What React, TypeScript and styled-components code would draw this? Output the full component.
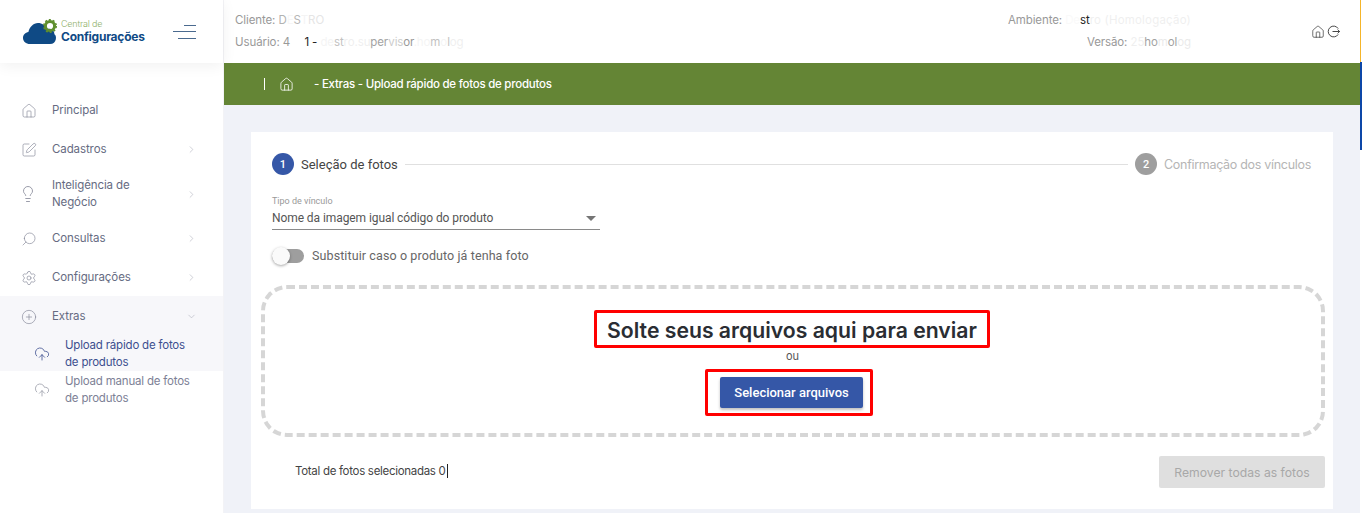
import {
  ChevronDown,
  ChevronRight,
  CirclePlus,
  CloudUpload,
  House,
  Lightbulb,
  Search,
  Settings,
  SquarePen,
} from 'lucide-react';
import type { ReactNode } from 'react';
import styled, { createGlobalStyle } from 'styled-components';

const GREEN = '#648535';
const BLUE = '#3557a7';
const PAGE_BG = '#f0f2f8';
const FONT = 'Inter, "Open Sans", sans-serif';
const FORM_FONT = 'Roboto, "Open Sans", sans-serif';

const GlobalStyle = createGlobalStyle`
  html, body {
    margin: 0;
    height: 513px;
    overflow: hidden;
    background: #fff;
    font-family: ${FONT};
  }
  * { box-sizing: border-box; }
`;

const LogoutIcon = () => (
  <svg width='13' height='13' viewBox='0 0 13 13' fill='none' stroke='#333' strokeWidth='0.9'>
    <path d='M11.2 3.6A5.4 5.4 0 1 0 11.2 9.4' />
    <path d='M5.5 6.5H12.6M10.6 4.6l2 1.9-2 1.9' />
  </svg>
);

const CloudLogo = () => (
  <svg width='36' height='26' viewBox='0 0 36 26'>
    <path
      d='M7 25C3 25 0 22.4 0 19c0-3.2 2.4-5.6 5.4-6C6.4 8 10.4 4 15 4c4 0 7.6 2.4 9 6 .6-.2 1.4-.2 2-.2 3.2 0 5.4 2.4 5.4 5.4 2.6 1 2.6 9.8-4.4 9.8Z'
      fill='#0f4a85'
    />
    <circle cx='27' cy='7' r='4.6' fill='none' stroke='#5f8f2e' strokeWidth='3' />
    <circle cx='27' cy='7' r='6.2' fill='none' stroke='#5f8f2e' strokeWidth='1.6' strokeDasharray='2 1.9' />
  </svg>
);

type NavEntry = { label: ReactNode; icon: ReactNode; chevron?: boolean };

const NAV_TOP: NavEntry[] = [
  { label: 'Principal', icon: <House size={16} strokeWidth={1} /> },
  { label: 'Cadastros', icon: <SquarePen size={16} strokeWidth={1} />, chevron: true },
  {
    label: (
      <>
        Inteligência de
        <br />
        Negócio
      </>
    ),
    icon: <BulbIcon size={18} strokeWidth={1.1} />,
    chevron: true,
  },
  { label: 'Consultas', icon: <MirroredSearch size={16} strokeWidth={1} />, chevron: true },
  { label: 'Configurações', icon: <Settings size={16} strokeWidth={1} />, chevron: true },
];

export default function App() {
  return (
    <>
      <GlobalStyle />
      <Page>
        <Sidebar>
          <LogoBar>
            <CloudLogo />
            <LogoText>
              <LogoSmall>Central de</LogoSmall>
              <LogoBig>Configurações</LogoBig>
            </LogoText>
            <Burger>
              <BurgerLine $width={12} />
              <BurgerLine $width={23} />
              <BurgerLine $width={18} />
            </Burger>
          </LogoBar>
          <Nav>
            {NAV_TOP.map((item, i) => (
              <NavRow key={i}>
                <NavIcon>{item.icon}</NavIcon>
                <NavLabel>{item.label}</NavLabel>
                {item.chevron && (
                  <NavChevron>
                    <ChevronRight size={11} strokeWidth={1.2} />
                  </NavChevron>
                )}
              </NavRow>
            ))}
            <NavGroup>
              <NavRow>
                <NavIcon>
                  <CirclePlus size={16} strokeWidth={1} />
                </NavIcon>
                <NavLabel>Extras</NavLabel>
                <NavChevron>
                  <ChevronDown size={11} strokeWidth={1.2} />
                </NavChevron>
              </NavRow>
              <SubRow $active>
                <CloudUpload size={16} strokeWidth={1.2} />
                <span>
                  Upload rápido de fotos
                  <br />
                  de produtos
                </span>
              </SubRow>
            </NavGroup>
            <SubRow>
              <CloudUpload size={16} strokeWidth={1.2} />
              <span>
                Upload manual de fotos
                <br />
                de produtos
              </span>
            </SubRow>
          </Nav>
        </Sidebar>

        <Column>
          <Header>
            <HeaderInfo>
              <InfoLine>
                Cliente: <Mask $o={0.75}>D</Mask>
                <Mask $o={0.08}>E</Mask>
                <Mask $o={0.7}>S</Mask>
                <Mask $o={0.1}>T</Mask>
                <Mask $o={0.25}>RO</Mask>
              </InfoLine>
              <InfoLine>
                Usuário: 4<Mask $o={0}>00</Mask>
                <Strong>1 - </Strong>
                <Mask $o={0.1}>de</Mask>
                <Mask $o={0.6}>st</Mask>
                <Mask $o={0.15}>ro.su</Mask>
                <Mask $o={0.9}>per</Mask>
                <Mask $o={0.5}>vis</Mask>
                <Mask $o={1}>or</Mask>
                <Mask $o={0.1}>.ho</Mask>
                <Mask $o={0.6}>m</Mask>
                <Mask $o={0.1}>o</Mask>
                <Mask $o={0.6}>l</Mask>
                <Mask $o={0.15}>og</Mask>
              </InfoLine>
            </HeaderInfo>
            <HeaderInfoRight>
              <InfoLine>
                Ambiente: <Mask $o={0.05}>De</Mask>
                <Strong>st</Strong>
                <Mask $o={0.15} $spacing={0.2}>
                  ro (Homologação)
                </Mask>
              </InfoLine>
              <InfoLine>
                Versão: <Mask $o={0.15}>25</Mask>
                <Mask $o={0.9}>ho</Mask>
                <Mask $o={0.2}>m</Mask>
                <Mask $o={0.9}>ol</Mask>
                <Mask $o={0.2}>og</Mask>
              </InfoLine>
            </HeaderInfoRight>
            <HeaderIcons>
              <House size={14} strokeWidth={1.1} />
              <LogoutIcon />
            </HeaderIcons>
          </Header>

          <Breadcrumb>
            <CrumbBar />
            <House size={15} strokeWidth={1.3} />
            <CrumbText>- Extras - Upload rápido de fotos de produtos</CrumbText>
          </Breadcrumb>

          <Main>
            <Card>
              <Stepper>
                <StepDot $active>1</StepDot>
                <StepLabel $active>Seleção de fotos</StepLabel>
                <StepLine />
                <StepDot>2</StepDot>
                <StepLabel>Confirmação dos vínculos</StepLabel>
              </Stepper>

              <SelectField>
                <SelectCaption>Tipo de vínculo</SelectCaption>
                <SelectValue>
                  Nome da imagem igual código do produto
                  <SelectArrow />
                </SelectValue>
              </SelectField>

              <SwitchRow>
                <SwitchTrack>
                  <SwitchKnob />
                </SwitchTrack>
                Substituir caso o produto já tenha foto
              </SwitchRow>

              <DropZone>
                <DropTitle>Solte seus arquivos aqui para enviar</DropTitle>
                <DropOr>ou</DropOr>
                <PickFrame>
                  <PickButton>Selecionar arquivos</PickButton>
                </PickFrame>
              </DropZone>

              <Footer>
                <TotalText>Total de fotos selecionadas 0</TotalText>
                <RemoveButton>Remover todas as fotos</RemoveButton>
              </Footer>
            </Card>
          </Main>
        </Column>

        <Rail>
          <RailTop />
          <RailThumb />
        </Rail>
      </Page>
    </>
  );
}

function MirroredSearch({ size, strokeWidth }: { size: number; strokeWidth: number }) {
  return <FlippedSearch size={size} strokeWidth={strokeWidth} />;
}

function BulbIcon({ size, strokeWidth }: { size: number; strokeWidth: number }) {
  return <ShiftedBulb size={size} strokeWidth={strokeWidth} />;
}

const FlippedSearch = styled(Search)`
  transform: scaleX(-1);
`;

const ShiftedBulb = styled(Lightbulb)`
  margin-left: -2px;
`;

const Page = styled.div`
  display: flex;
  width: 1362px;
  height: 513px;
  overflow: hidden;
`;

const Sidebar = styled.aside`
  width: 224px;
  flex: none;
  background: #fff;
  border-right: 1px solid #f3f3f6;
`;

const LogoBar = styled.div`
  height: 63px;
  display: flex;
  align-items: center;
  padding: 0 0 0 23px;
  box-shadow: 0 3px 14px rgba(0, 0, 0, 0.06);
  position: relative;
`;

const LogoText = styled.div`
  display: flex;
  flex-direction: column;
  margin-left: 2px;
  width: 112px;
`;

const LogoSmall = styled.span`
  font-size: 9px;
  line-height: 10px;
  font-weight: 300;
  color: #8fb06a;
  letter-spacing: -0.2px;
`;

const LogoBig = styled.span`
  font-size: 12px;
  line-height: 15px;
  font-weight: 700;
  color: #0f4a85;
  letter-spacing: -0.25px;
`;

const Burger = styled.div`
  display: flex;
  flex-direction: column;
  align-items: flex-end;
  gap: 5.5px;
  width: 23px;
`;

const BurgerLine = styled.span<{ $width: number }>`
  display: block;
  height: 1px;
  width: ${props => props.$width}px;
  background: #4a6a8f;
`;

const Nav = styled.nav`
  padding-top: 27px;
  color: #666b82;
  font-size: 11.5px;
  letter-spacing: -0.1px;
`;

const NavGroup = styled.div`
  background: #f7f7fa;
`;

const NavRow = styled.div`
  display: flex;
  align-items: center;
  min-height: 39px;
  padding: 9px 26px 7px 21px;
  line-height: 17px;
`;

const NavIcon = styled.span`
  display: flex;
  width: 31px;
  color: #858898;
`;

const NavLabel = styled.span`
  flex: 1;
`;

const NavChevron = styled.span`
  display: flex;
  color: #a9abb8;
`;

const SubRow = styled.div<{ $active?: boolean }>`
  display: flex;
  align-items: center;
  gap: 15px;
  height: 36px;
  padding: 1px 0 0 34px;
  line-height: 17px;
  letter-spacing: -0.2px;
  color: ${props => (props.$active ? '#3d4f8f' : '#7d8196')};

  svg {
    flex: none;
    color: ${props => (props.$active ? '#3d4f8f' : '#9a9da8')};
  }
`;

const Column = styled.div`
  flex: 1;
  min-width: 0;
  display: flex;
  flex-direction: column;
`;

const Header = styled.header`
  height: 63px;
  flex: none;
  display: flex;
  align-items: center;
  padding: 0 20px 0 11px;
  background: #fff;
  font-size: 11.5px;
  letter-spacing: -0.1px;
  color: #999;
`;

const HeaderInfo = styled.div`
  flex: 1;
  display: flex;
  flex-direction: column;
  gap: 8px;
  margin-top: -2px;
`;

const HeaderInfoRight = styled(HeaderInfo)`
  align-items: flex-end;
  margin-right: 120px;
`;

const InfoLine = styled.div`
  line-height: 14px;
  white-space: pre;
`;

const Mask = styled.span<{ $o: number; $spacing?: number }>`
  opacity: ${props => props.$o};
  letter-spacing: ${props => props.$spacing ?? -0.1}px;
`;

const Strong = styled.span`
  color: #222;
`;

const HeaderIcons = styled.div`
  display: flex;
  align-items: center;
  gap: 2px;
  color: #222;
`;

const Breadcrumb = styled.div`
  height: 42px;
  flex: none;
  display: flex;
  align-items: center;
  padding-left: 40px;
  background: ${GREEN};
  color: #fff;
`;

const CrumbBar = styled.span`
  width: 1px;
  height: 12px;
  background: #fff;
  margin-right: 14px;
`;

const CrumbText = styled.span`
  margin-left: 20px;
  font-size: 11.5px;
  font-weight: 500;
  letter-spacing: -0.25px;
`;

const Main = styled.main`
  flex: 1;
  background: ${PAGE_BG};
  padding: 27px 27px 0;
`;

const Card = styled.section`
  height: 377px;
  background: #fff;
  padding: 21px 8px 0 10px;
`;

const Stepper = styled.div`
  display: flex;
  align-items: center;
  padding: 0 14px 0 11px;
`;

const StepDot = styled.span<{ $active?: boolean }>`
  width: 22px;
  height: 22px;
  flex: none;
  display: grid;
  place-items: center;
  border-radius: 50%;
  background: ${props => (props.$active ? BLUE : '#9e9e9e')};
  color: #fff;
  font: 500 11px Roboto, sans-serif;
`;

const StepLabel = styled.span<{ $active?: boolean }>`
  margin-left: 7px;
  font-family: ${props => (props.$active ? FORM_FONT : FONT)};
  font-size: ${props => (props.$active ? '13px' : '12.5px')};
  letter-spacing: ${props => (props.$active ? '0' : '-0.3px')};
  color: ${props => (props.$active ? '#444' : '#b5b5b5')};
`;

const StepLine = styled.span`
  flex: 1;
  height: 1px;
  margin: 0 7px;
  background: #e0e0e0;
`;

const SelectField = styled.div`
  width: 328px;
  margin: 21px 0 0 11px;
  font-family: ${FORM_FONT};
`;

const SelectCaption = styled.div`
  font-size: 9px;
  line-height: 11px;
  color: #999;
`;

const SelectValue = styled.div`
  position: relative;
  height: 23px;
  padding-top: 4px;
  font-size: 12px;
  letter-spacing: -0.08px;
  line-height: 15px;
  color: #555;
  border-bottom: 1px solid #8a8a8a;
`;

const SelectArrow = styled.span`
  position: absolute;
  right: 4px;
  top: 9px;
  border: 5px solid transparent;
  border-top-color: #757575;
  border-bottom: 0;
`;

const SwitchRow = styled.div`
  display: flex;
  align-items: center;
  gap: 8px;
  margin: 18px 0 0 11px;
  font-family: ${FORM_FONT};
  font-size: 12.5px;
  letter-spacing: 0.1px;
  color: #666;
`;

const SwitchTrack = styled.span`
  position: relative;
  display: block;
  width: 32px;
  height: 14px;
  border-radius: 7px;
  background: #9e9e9e;
`;

const SwitchKnob = styled.span`
  position: absolute;
  left: 0;
  top: -2px;
  width: 18px;
  height: 18px;
  border-radius: 50%;
  background: #fafafa;
  box-shadow: 0 1px 3px rgba(0, 0, 0, 0.35);
`;

const DropZone = styled.div`
  height: 152px;
  margin-top: 22px;
  border: 4px dashed #d6d6d6;
  border-radius: 26px;
  display: flex;
  flex-direction: column;
  align-items: center;
  padding-top: 21px;
`;

const DropTitle = styled.div`
  width: 396px;
  height: 38px;
  margin-right: 2px;
  padding-top: 2px;
  border: 3px solid #f00;
  border-radius: 2px;
  display: grid;
  place-items: center;
  font-size: 21.2px;
  font-weight: 600;
  color: #2a2d33;
  white-space: nowrap;
`;

const DropOr = styled.div`
  font-size: 11px;
  line-height: 14px;
  margin: 1px 1px 0 0;
  color: #555;
`;

const PickFrame = styled.div`
  width: 168px;
  height: 47px;
  margin: 6px 8px 0 0;
  padding-left: 5px;
  border: 3px solid #f00;
  border-radius: 2px;
  display: grid;
  place-items: center;
`;

const PickButton = styled.button`
  width: 143px;
  height: 31px;
  border: none;
  border-radius: 2px;
  background: ${BLUE};
  color: #fff;
  font: 500 13px Roboto, sans-serif;
  box-shadow: 0 2px 3px rgba(0, 0, 0, 0.25);
`;

const Footer = styled.div`
  display: flex;
  align-items: center;
  justify-content: space-between;
  margin-top: 19px;
  padding-left: 34px;
`;

const TotalText = styled.span`
  font-size: 11.5px;
  letter-spacing: -0.3px;
  color: #444;
  padding-right: 1px;
  border-right: 1px solid #222;
  line-height: 14px;
  margin-top: -2px;
`;

const RemoveButton = styled.button`
  width: 166px;
  height: 32px;
  border: none;
  border-radius: 2px;
  background: #dfdfdf;
  color: #a8a8a8;
  font: 400 12.2px ${FONT};
`;

const Rail = styled.div`
  width: 2px;
  flex: none;
  background: #fff;
`;

const RailTop = styled.div`
  height: 62px;
  border-left: 1px solid #f5b52a;
`;

const RailThumb = styled.div`
  height: 88px;
  background: #0d47a8;
`;
